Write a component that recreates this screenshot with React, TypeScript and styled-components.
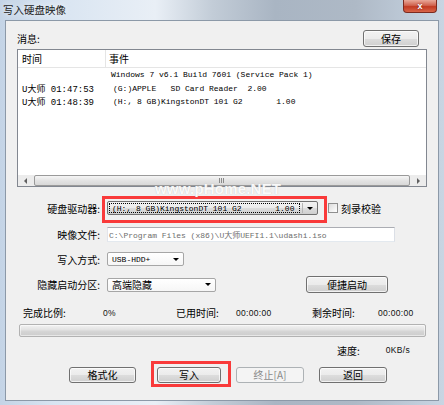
import React from "react";
import styled, { createGlobalStyle, css } from "styled-components";

const GlobalStyle = createGlobalStyle`
  html, body { margin: 0; padding: 0; background: #fff; overflow: hidden; }
  body {
    font-family: "Noto Sans CJK SC", "Liberation Sans", sans-serif;
    font-size: 10px;
    color: #000;
  }
`;

const mono = css`
  font-family: "Liberation Mono", "Noto Sans CJK SC", monospace;
  font-size: 8px;
`;

const Window = styled.div`
  position: relative;
  width: 444px;
  height: 405px;
  box-sizing: border-box;
  display: flex;
  flex-direction: column;
  background: linear-gradient(90deg, #c4d4e6 0%, #d8e4f1 12%, #e9eff6 35%, #c2ccd7 48%, #a9b5c3 62%, #aeb9c6 80%, #c8d5e3 100%);
`;

const TitleBar = styled.div`
  height: 20px;
  display: flex;
  align-items: flex-start;
  justify-content: space-between;
  padding: 0 7px 0 3px;
`;

const Title = styled.span`
  font-size: 10.5px;
  line-height: 19px;
  color: #1b1b1b;
  text-shadow: 0 0 6px rgba(255, 255, 255, 0.9);
`;

const CloseBtn = styled.div`
  width: 34px;
  height: 13px;
  box-sizing: border-box;
  border: 1px solid #7c2a1f;
  border-top: none;
  border-radius: 0 0 4px 4px;
  background: linear-gradient(#e9a899 0%, #d0634f 45%, #c23a22 55%, #d8654a 100%);
  color: #fff;
  font: bold 9px "Liberation Sans", sans-serif;
  display: flex;
  align-items: center;
  justify-content: center;
  text-shadow: 0 0 2px #6a1a10;
`;

const Frame = styled.div`
  flex: 1;
  display: flex;
  padding: 0 5px 4px 5px;
`;

const Body = styled.div`
  flex: 1;
  display: flex;
  flex-direction: column;
  background: #f0f0f0;
  border: 1px solid #8c99a8;
  padding: 9px 11px 0 11px;
`;

const MsgHeader = styled.div`
  display: flex;
  align-items: center;
  justify-content: space-between;
  height: 17px;
  padding-right: 8px;
`;

const Button = styled.button<{ $w: number; $h?: number }>`
  width: ${(p) => p.$w}px;
  height: ${(p) => p.$h ?? 16}px;
  box-sizing: border-box;
  padding: 0;
  border: 1px solid #707070;
  border-radius: 3px;
  background: linear-gradient(#f2f2f2 0%, #ebebeb 50%, #dddddd 51%, #cfcfcf 100%);
  box-shadow: inset 0 0 0 1px rgba(255, 255, 255, 0.7);
  font-family: "Noto Sans CJK SC", sans-serif;
  font-size: 10px;
  line-height: 1;
  color: #000;
  flex-shrink: 0;

  &:disabled {
    border-color: #adb2b5;
    background: #f4f4f4;
    box-shadow: none;
    color: #8a8a8a;
  }
`;

const ListBox = styled.div`
  margin-top: 2px;
  height: 138px;
  box-sizing: border-box;
  border: 1px solid #828790;
  background: #fff;
  display: flex;
  flex-direction: column;
`;

const ListGrid = styled.div`
  display: grid;
  grid-template-columns: 88px 1fr;
`;

const HeaderRow = styled(ListGrid)`
  height: 17px;
  border-bottom: 1px solid #e5e5e5;
  align-items: center;
`;

const HeaderCell = styled.div<{ $first?: boolean }>`
  height: 100%;
  display: flex;
  align-items: center;
  padding-left: ${(p) => (p.$first ? 4 : 3)}px;
  border-right: ${(p) => (p.$first ? "1px solid #e5e5e5" : "none")};
  box-sizing: border-box;
  font-size: 10px;
`;

const Rows = styled.div`
  flex: 1;
`;

const Row = styled(ListGrid)`
  height: 13.5px;
  align-items: center;
  ${mono};
  white-space: pre;
`;

const TimeCell = styled.span`
  padding-left: 4px;
  font-size: 9px;
`;

const EventCell = styled.span<{ $indent: number }>`
  padding-left: ${(p) => p.$indent}px;
`;

const HScroll = styled.div`
  height: 11px;
  display: flex;
  align-items: stretch;
  background: #ececec;
`;

const ScrollArrow = styled.div<{ $dir: "left" | "right" }>`
  width: 15px;
  display: flex;
  align-items: center;
  justify-content: center;

  &::before {
    content: "";
    border-top: 3px solid transparent;
    border-bottom: 3px solid transparent;
    ${(p) =>
      p.$dir === "left"
        ? "border-right: 3px solid #606060;"
        : "border-left: 3px solid #606060;"}
  }
`;

const Thumb = styled.div`
  flex: 1;
  margin: 0 1px;
  box-sizing: border-box;
  border: 1px solid #9a9a9a;
  border-radius: 2px;
  background: linear-gradient(#f6f6f6, #e2e2e2 55%, #d8d8d8);
  display: flex;
  align-items: center;
  justify-content: center;
`;

const Grip = styled.div`
  width: 6px;
  height: 5px;
  background: repeating-linear-gradient(90deg, #8a8a8a 0 1px, transparent 1px 2px);
`;

const FormRow = styled.div<{ $mt: number; $h: number }>`
  display: flex;
  align-items: center;
  margin-top: ${(p) => p.$mt}px;
  height: ${(p) => p.$h}px;
`;

const Label = styled.span`
  width: 83px;
  margin-right: 7px;
  text-align: right;
  white-space: nowrap;
  flex-shrink: 0;
`;

const Highlight = styled.div<{ $inset: string }>`
  position: relative;
  display: flex;

  &::after {
    content: "";
    position: absolute;
    inset: ${(p) => p.$inset};
    border: 3px solid #f93a3a;
    pointer-events: none;
  }
`;

const Combo = styled.div<{ $w: number; $plain?: boolean }>`
  width: ${(p) => p.$w}px;
  height: 14px;
  box-sizing: border-box;
  display: flex;
  align-items: center;
  border: 1px solid ${(p) => (p.$plain ? "#a6a6a6" : "#707070")};
  border-radius: 2px;
  background: ${(p) =>
    p.$plain
      ? "linear-gradient(#ffffff, #f6f6f6)"
      : "linear-gradient(#f2f2f2 0%, #ebebeb 50%, #dddddd 51%, #cfcfcf 100%)"};
  padding: 1px 0 1px 1px;
`;

const ComboText = styled.span<{ $focus?: boolean; $cjk?: boolean }>`
  flex: 1;
  height: 100%;
  box-sizing: border-box;
  display: flex;
  align-items: center;
  padding-left: 2px;
  white-space: pre;
  ${(p) => (p.$cjk ? "font-size: 10px;" : mono)};
  border: 1px dotted ${(p) => (p.$focus ? "#000" : "transparent")};
  border-right: ${(p) => (p.$focus ? "1px dotted #000" : "none")};
`;

const ComboArrow = styled.span<{ $sep?: boolean }>`
  width: 14px;
  height: 100%;
  display: flex;
  align-items: center;
  justify-content: center;
  border-left: ${(p) => (p.$sep ? "1px solid #b5b5b5" : "none")};
  margin-left: ${(p) => (p.$sep ? 2 : 0)}px;

  &::before {
    content: "";
    border-left: 3px solid transparent;
    border-right: 3px solid transparent;
    border-top: 3px solid #000;
  }
`;

const CheckBox = styled.span`
  width: 10px;
  height: 10px;
  box-sizing: border-box;
  margin-left: 10px;
  border: 1px solid #8f8f8f;
  background: linear-gradient(135deg, #dcdcdc, #ffffff);
  flex-shrink: 0;
`;

const CheckLabel = styled.span`
  margin-left: 3px;
`;

const TextField = styled.div`
  width: 288px;
  height: 15px;
  box-sizing: border-box;
  border: 1px solid #abadb3;
  border-color: #abadb3 #dbdfe6 #e3e9ef #e2e3ea;
  background: #fff;
  color: #6d6d6d;
  ${mono};
  display: flex;
  align-items: center;
  padding-left: 1px;
  white-space: pre;
`;

const StatsRow = styled.div`
  margin-top: 12px;
  height: 12px;
  padding-left: 6px;
  display: grid;
  grid-template-columns: 80px 73px 60px 76px 66px auto;
  align-items: center;
  white-space: nowrap;
`;

const Value = styled.span`
  font-family: "Liberation Sans", sans-serif;
  font-size: 8.5px;
  letter-spacing: 0.3px;
  color: #111;
`;

const Progress = styled.div`
  margin: 7px 1px 0 2px;
  height: 13px;
  box-sizing: border-box;
  border: 1px solid #b2b2b2;
  border-radius: 2px;
  background: linear-gradient(#f2f2f2 0%, #e4e4e4 40%, #d4d4d4 60%, #cdcdcd 100%);
  box-shadow: inset 0 0 0 1px rgba(255, 255, 255, 0.5);
`;

const SpeedRow = styled.div`
  margin-top: 7px;
  height: 12px;
  display: flex;
  align-items: center;
  justify-content: flex-end;
  gap: 26px;
  padding-right: 17px;
`;

const ButtonRow = styled.div`
  margin-top: 11px;
  height: 16px;
  display: flex;
  align-items: center;
  padding-left: 52px;
`;

const Gap = styled.span<{ $w: number }>`
  width: ${(p) => p.$w}px;
  flex-shrink: 0;
`;

const Watermark = styled.div`
  position: absolute;
  left: 155px;
  top: 180px;
  font: bold 15px "Liberation Sans", sans-serif;
  color: rgba(255, 255, 255, 0.92);
  text-shadow: 0 0 1px rgba(170, 170, 170, 0.7);
  letter-spacing: 0.2px;
  pointer-events: none;
`;

const logRows = [
  { time: "", event: "Windows 7 v6.1 Build 7601 (Service Pack 1)", indent: 5 },
  { time: "U大师 01:47:53", event: "(G:)APPLE   SD Card Reader  2.00", indent: 7 },
  { time: "U大师 01:48:39", event: "(H:, 8 GB)KingstonDT 101 G2       1.00", indent: 7 },
];

export default function App() {
  return (
    <>
      <GlobalStyle />
      <Window>
        <TitleBar>
          <Title>写入硬盘映像</Title>
          <CloseBtn>x</CloseBtn>
        </TitleBar>
        <Frame>
          <Body>
            <MsgHeader>
              <span>消息:</span>
              <Button $w={56} $h={17}>保存</Button>
            </MsgHeader>
            <ListBox>
              <HeaderRow>
                <HeaderCell $first>时间</HeaderCell>
                <HeaderCell>事件</HeaderCell>
              </HeaderRow>
              <Rows>
                {logRows.map((r, i) => (
                  <Row key={i}>
                    <TimeCell>{r.time}</TimeCell>
                    <EventCell $indent={r.indent}>{r.event}</EventCell>
                  </Row>
                ))}
              </Rows>
              <HScroll>
                <ScrollArrow $dir="left" />
                <Thumb>
                  <Grip />
                </Thumb>
                <ScrollArrow $dir="right" />
              </HScroll>
            </ListBox>

            <FormRow $mt={14} $h={14}>
              <Label>硬盘驱动器:</Label>
              <Highlight $inset="-5px -9px -8px -5px">
                <Combo $w={211}>
                  <ComboText $focus>{"(H:, 8 GB)KingstonDT 101 G2       1.00"}</ComboText>
                  <ComboArrow $sep />
                </Combo>
              </Highlight>
              <CheckBox />
              <CheckLabel>刻录校验</CheckLabel>
            </FormRow>

            <FormRow $mt={12} $h={15}>
              <Label>映像文件:</Label>
              <TextField>{"C:\\Program Files (x86)\\U大师UEFI1.1\\udashi.iso"}</TextField>
            </FormRow>

            <FormRow $mt={10} $h={14}>
              <Label>写入方式:</Label>
              <Combo $w={77} $plain>
                <ComboText>USB-HDD+</ComboText>
                <ComboArrow />
              </Combo>
            </FormRow>

            <FormRow $mt={10} $h={17}>
              <Label>隐藏启动分区:</Label>
              <Combo $w={109} $plain>
                <ComboText $cjk>高端隐藏</ComboText>
                <ComboArrow />
              </Combo>
              <Gap $w={90} />
              <Button $w={82} $h={17}>便捷启动</Button>
            </FormRow>

            <StatsRow>
              <span>完成比例:</span>
              <Value>0%</Value>
              <span>已用时间:</span>
              <Value>00:00:00</Value>
              <span>剩余时间:</span>
              <Value>00:00:00</Value>
            </StatsRow>

            <Progress />

            <SpeedRow>
              <span>速度:</span>
              <Value>0KB/s</Value>
            </SpeedRow>

            <ButtonRow>
              <Button $w={67}>格式化</Button>
              <Gap $w={21} />
              <Highlight $inset="-6px -10px -4px -6px">
                <Button $w={64}>写入</Button>
              </Highlight>
              <Gap $w={15} />
              <Button $w={68} disabled>终止[A]</Button>
              <Gap $w={15} />
              <Button $w={68}>返回</Button>
            </ButtonRow>
          </Body>
        </Frame>
        <Watermark>www.pHome.NET</Watermark>
      </Window>
    </>
  );
}
